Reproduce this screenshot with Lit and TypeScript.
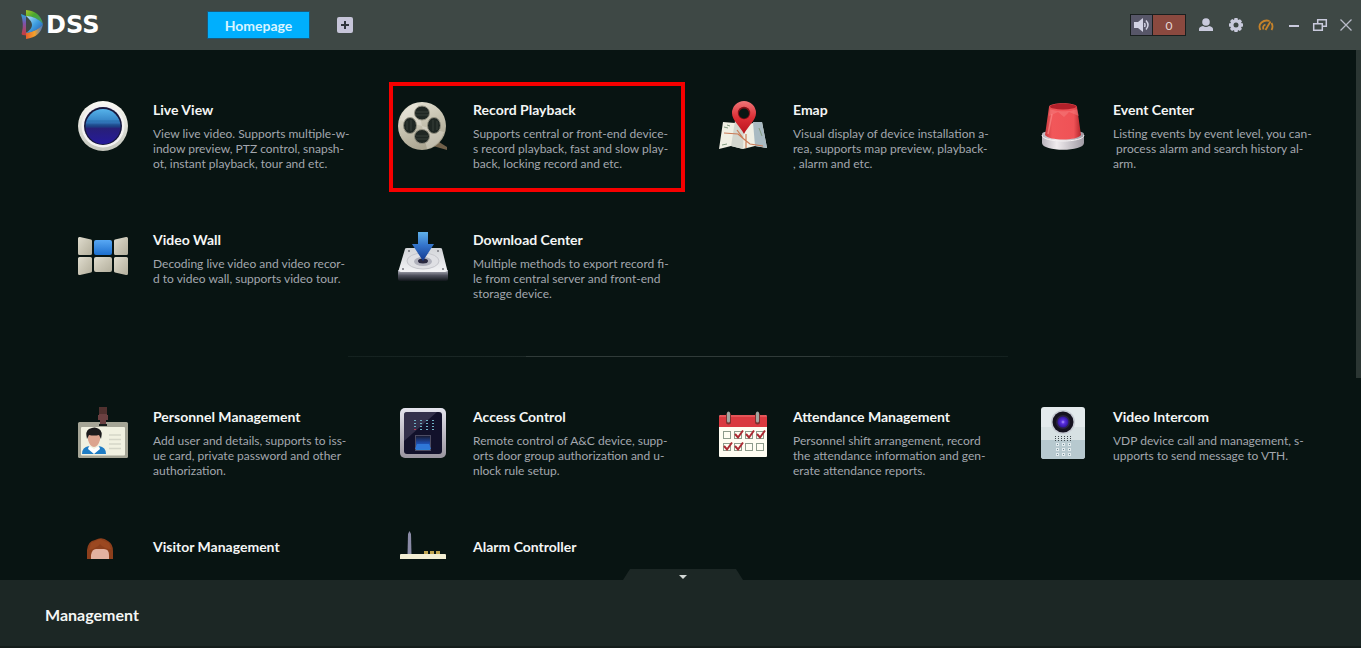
import { LitElement, html, svg, css, TemplateResult } from "lit";
import { customElement, property } from "lit/decorators.js";

interface Tile {
  icon: string;
  title: string;
  text: string;
  marked?: boolean;
}

const general: Tile[] = [
  { icon: "live", title: "Live View", text: "View live video. Supports multiple-w-\nindow preview, PTZ control, snapsh-\not, instant playback, tour and etc." },
  { icon: "reel", title: "Record Playback", text: "Supports central or front-end device-\ns record playback, fast and slow play-\nback, locking record and etc.", marked: true },
  { icon: "map", title: "Emap", text: "Visual display of device installation a-\nrea, supports map preview, playback-\n, alarm and etc." },
  { icon: "siren", title: "Event Center", text: "Listing events by event level, you can-\n process alarm and search history al-\narm." },
  { icon: "wall", title: "Video Wall", text: "Decoding live video and video recor-\nd to video wall, supports video tour." },
  { icon: "download", title: "Download Center", text: "Multiple methods to export record fi-\nle from central server and front-end\nstorage device." },
];

const extended: Tile[] = [
  { icon: "badge", title: "Personnel Management", text: "Add user and details, supports to iss-\nue card, private password and other\nauthorization." },
  { icon: "access", title: "Access Control", text: "Remote control of A&C device, supp-\norts door group authorization and u-\nnlock rule setup." },
  { icon: "calendar", title: "Attendance Management", text: "Personnel shift arrangement, record\nthe attendance information and gen-\nerate attendance reports." },
  { icon: "intercom", title: "Video Intercom", text: "VDP device call and management, s-\nupports to send message to VTH." },
  { icon: "visitor", title: "Visitor Management", text: "" },
  { icon: "alarm", title: "Alarm Controller", text: "" },
];

const dots = (xs: number[], ys: number[], w: number, h: number, fill: string) =>
  ys.map((y) => xs.map((x) => svg`<rect x=${x} y=${y} width=${w} height=${h} fill=${fill} />`));

const dayBox = (x: number, y: number, ticked: boolean) => svg`
  <rect x=${x + 0.5} y=${y + 0.5} width="7" height="7" fill="#fffdf2" stroke="#8d9b8b" />
  ${ticked ? svg`<path d=${`M${x + 1} ${y + 3}l3 3.5 5-7`} fill="none" stroke="#ab2a33" stroke-width="2" />` : ""}`;

const icons: Record<string, TemplateResult> = {
  live: svg`
    <defs>
      <linearGradient id="rim" x2="0" y2="1"><stop stop-color="#fbfaf4" /><stop offset="1" stop-color="#c3c5bc" /></linearGradient>
      <linearGradient id="lens" x2="0" y2="1">
        <stop stop-color="#56b3ea" /><stop offset=".35" stop-color="#3583c6" /><stop offset=".5" stop-color="#1d3f85" />
        <stop offset=".56" stop-color="#281f78" /><stop offset="1" stop-color="#251a9b" />
      </linearGradient>
    </defs>
    <circle cx="26" cy="26" r="25" fill="url(#rim)" />
    <circle cx="26" cy="26" r="21.5" fill="#f3f2f2" />
    <circle cx="26" cy="26" r="19" fill="#17173d" />
    <circle cx="26" cy="26.5" r="17.5" fill="url(#lens)" />
    <path d="M9 21h34M8.500 25h35" stroke="#123b70" stroke-width="1" opacity=".3" />`,
  reel: svg`
    <defs>
      <linearGradient id="tin" x2=".4" y2="1"><stop stop-color="#e9e7da" /><stop offset=".5" stop-color="#cbc7b5" /><stop offset="1" stop-color="#aaa591" /></linearGradient>
    </defs>
    <path d="M36 46l6-4 8 5v3z" fill="#71614a" />
    <circle cx="25" cy="26" r="24" fill="url(#tin)" />
    <path d="M3 20A24 24 0 0 1 20 3l5 23z M47 32A24 24 0 0 1 30 49l-5-23z" fill="#f1efe5" opacity=".35" />
    <g fill="#1f2723" stroke="#949283">
      <ellipse cx="25" cy="13" rx="7.500" ry="7" /><ellipse cx="25" cy="36.500" rx="7.500" ry="7" />
      <ellipse cx="13" cy="25.500" rx="6.500" ry="8" /><ellipse cx="37" cy="25.500" rx="6.500" ry="8" />
    </g>
    <path d="M19 12h12M19 15h12M19 36h12M19 39h12M10 21v9M14 20v11M36 20v11M40 21v9" stroke="#39413a" stroke-width="1" />`,
  map: svg`
    <defs>
      <linearGradient id="pin" x2="0" y2="1"><stop stop-color="#ef7577" /><stop offset=".5" stop-color="#dc2e35" /><stop offset="1" stop-color="#b9131c" /></linearGradient>
    </defs>
    <path d="M6 22l12 1 9 2 9-2 9-1 5 26-12-2-12 3-12-3-12 3z" fill="#f0efe4" />
    <path d="M18 21l9 4-1 24-12-3z" fill="#d3d6ce" />
    <path d="M36 22l9 0 5 26-12-2z" fill="#a9bac2" />
    <path d="M7 33l14 1 7 6 5 4 13 2M29 34v14M20 30l6 8" fill="none" stroke="#cb7b56" stroke-width="1.200" />
    <path d="M7 27l4 1M5 45l5-1M42 28l3 8M10 25l3 1" stroke="#819b80" />
    <path d="M27 34C23 26 15 20.500 15 13a12 12 0 0 1 24 0C39 20.500 31 26 27 34z" fill="url(#pin)" />
    <circle cx="27" cy="13" r="6.200" fill="#821017" /><circle cx="27" cy="13.500" r="5" fill="#081613" />`,
  siren: svg`
    <defs>
      <linearGradient id="dome" x2="1" y2="0"><stop stop-color="#c93a3e" /><stop offset=".2" stop-color="#f1575a" /><stop offset=".8" stop-color="#ef5256" /><stop offset="1" stop-color="#b3262c" /></linearGradient>
      <linearGradient id="foot" x2="1" y2="0"><stop stop-color="#b9b3bc" /><stop offset=".35" stop-color="#f0ebee" /><stop offset="1" stop-color="#a09ba4" /></linearGradient>
    </defs>
    <path d="M5 34c0-5 42-5 42 0v9c0 9-42 9-42 0z" fill="url(#foot)" />
    <path d="M5 35c0 8 42 8 42 0" fill="none" stroke="#f7f2f4" />
    <path d="M12 7c0-5 28-5 28 0l4 28c-4 6-32 6-36 0z" fill="url(#dome)" />
    <ellipse cx="26" cy="6.500" rx="13" ry="3" fill="#b3202a" />
    <path d="M12 16l9-4 6 5 5-5 10 4-2-7c-5 3-22 3-27 0z" fill="#f7898a" opacity=".4" />
    <path d="M15 14l-4 20" stroke="#ff9290" stroke-width="1.500" opacity=".6" />`,
  wall: svg`
    <defs>
      <linearGradient id="panel" x2="1" y2="1"><stop stop-color="#e0ddcf" /><stop offset=".5" stop-color="#c9c5b4" /><stop offset="1" stop-color="#b3af9d" /></linearGradient>
      <linearGradient id="screen" x2="0" y2="1"><stop stop-color="#58a8f4" /><stop offset="1" stop-color="#1d6fce" /></linearGradient>
    </defs>
    <g fill="url(#panel)">
      <path d="M1 8.500q0-2 2-1.500l11 2.500q1 .3 1 1.500v12.500q0 1.500-1.500 1.500h-11Q1 25 1 23.500z" />
      <path d="M51 8.500q0-2-2-1.500L38 9.500q-1 .3-1 1.500v12.500q0 1.500 1.500 1.500h11q1.500 0 1.500-1.500z" />
      <path d="M1 28.500Q1 27 2.500 27h11q1.500 0 1.500 1.500V41q0 1.200-1 1.500L3 45q-2 .5-2-1.500z" />
      <path d="M51 28.500q0-1.500-1.500-1.500h-11q-1.500 0-1.500 1.500V41q0 1.200 1 1.500L49 45q2 .5 2-1.500z" />
      <rect x="17" y="27" width="18" height="15" rx="2" />
    </g>
    <rect x="17" y="10" width="18" height="15" rx="2" fill="url(#screen)" />`,
  download: svg`
    <defs>
      <linearGradient id="disk" x2="0" y2="1"><stop stop-color="#d3d5d9" /><stop offset="1" stop-color="#f2f3f5" /></linearGradient>
      <linearGradient id="shade" x2="0" y2="1"><stop stop-color="#b6b8c2" /><stop offset=".5" stop-color="#4e505c" /><stop offset="1" stop-color="#10161a" /></linearGradient>
      <linearGradient id="arrow" x2="0" y2="1"><stop stop-color="#5fb0e8" /><stop offset=".45" stop-color="#3475cc" /><stop offset="1" stop-color="#12378e" /></linearGradient>
    </defs>
    <path d="M1 40h50v9q0 2-2 2H3q-2 0-2-2z" fill="url(#shade)" />
    <path d="M10 18h33q2 0 2 1l5 20q1 3-2 3H4q-3 0-2-3l6-20q0-1 2-1z" fill="url(#disk)" />
    <ellipse cx="26" cy="31" rx="16" ry="8" fill="#dfe0e4" stroke="#c5c6cc" />
    <ellipse cx="26" cy="31.500" rx="9" ry="4.500" fill="#b0b1bc" /><ellipse cx="26" cy="31" rx="5" ry="2.500" fill="#29283f" />
    <g fill="#74767d"><circle cx="12" cy="21" r="1" /><circle cx="41" cy="21" r="1" /><circle cx="6" cy="39" r="1" /><circle cx="46" cy="39" r="1" /></g>
    <path d="M21 2h10v12h6L26 31 15 14h6z" fill="url(#arrow)" />`,
  badge: svg`
    <rect x="1" y="15" width="50" height="36" rx="1.500" fill="#a5a596" />
    <rect x="4" y="20" width="44" height="28.500" rx="1" fill="#f1f1e1" />
    <path d="M22 0h8v8h1v5h-2v5h-6v-5h-2V8h1z" fill="#6b4041" /><path d="M22 0h8v7h-8z" fill="#51312f" /><path d="M22 17h8v2h-8z" fill="#171c1b" />
    <path d="M5 47q0-7 7-8l5 5 5-5q7 1 7 8z" fill="#1f7dc5" />
    <path d="M12 39l5 3 5-3 1 3-6 5-6-5z" fill="#fff" />
    <path d="M11 27h12v6q-2 7-6 7t-6-7z" fill="#dca48f" />
    <path d="M10 32q-2-8 2-10 6-3 10 0 4 2 2 10l-2-4q-5 1-10 0z" fill="#1b1b1c" />
    <path d="M32 28h12M32 32.500h12M32 37h12M32 41.500h12" stroke="#d5d6c8" stroke-width="1.500" />`,
  access: svg`
    <defs>
      <linearGradient id="frame" x2="0" y2="1"><stop stop-color="#e4e4ed" /><stop offset="1" stop-color="#99949f" /></linearGradient>
      <linearGradient id="finger" x2="0" y2="1"><stop stop-color="#17172a" /><stop offset=".5" stop-color="#1e4ba9" /><stop offset="1" stop-color="#2f86dd" /></linearGradient>
    </defs>
    <rect x="3" y="1" width="46" height="50" rx="5" fill="url(#frame)" />
    <rect x="7" y="5" width="38" height="42" rx="3" fill="#12112b" />
    <path d="M7 34V8q0-3 3-3h30z" fill="#4a4660" opacity=".6" />
    ${dots([17, 23, 29, 35], [13, 16, 19], 2, 1, "#6fb0c4")}
    ${dots([17], [22], 2, 1, "#b33a56")}${dots([23, 29, 35], [22], 2, 1, "#6fb0c4")}
    <rect x="18.500" y="28.500" width="15" height="15" fill="url(#finger)" stroke="#4c4b62" />
    <path d="M20 37h12l2 5H18z" fill="#2f77d8" />`,
  calendar: svg`
    <path d="M2 10q0-2 2-2h44q2 0 2 2v39q0 1-1 1H3q-1 0-1-1z" fill="#fffdf2" />
    <path d="M2 20V10q0-2 2-2h44q2 0 2 2v10z" fill="#d9393f" /><path d="M3 9h46" stroke="#ef7373" />
    <path d="M11.500 8v7M40.500 8v7" stroke="#7c302f" stroke-width="5" stroke-linecap="round" />
    <path d="M11.500 6v8M40.500 6v8" stroke="#a3a7a1" stroke-width="3" stroke-linecap="round" />
    ${dayBox(6, 24, false)}${dayBox(17, 24, true)}${dayBox(28, 24, true)}${dayBox(39, 24, true)}
    ${dayBox(6, 36, true)}${dayBox(17, 36, true)}${dayBox(28, 36, false)}${dayBox(39, 36, false)}`,
  intercom: svg`
    <defs><radialGradient id="eye"><stop stop-color="#b49bff" /><stop offset=".35" stop-color="#5b2fe0" /><stop offset="1" stop-color="#2f149c" /></radialGradient></defs>
    <rect x="4" y="0" width="44" height="52" rx="3" fill="#e3eaec" />
    <path d="M4 33h44v16q0 3-3 3H7q-3 0-3-3z" fill="#b7c9cf" />
    <path d="M4 20h44v13H4z" fill="#cfdadd" opacity=".6" />
    <circle cx="26" cy="15" r="12" fill="#c7ccd4" /><circle cx="26" cy="15" r="10.500" fill="#15121f" />
    <circle cx="26" cy="15" r="7" fill="#2b2440" /><circle cx="26" cy="15" r="5.500" fill="url(#eye)" />
    ${dots([18, 21, 24, 27, 30, 33], [29, 31, 33], 1, 1, "#424b50")}
    ${dots([19, 25, 31], [36, 41, 46], 3, 3, "#e2ebee")}${dots([20, 26, 32], [37, 42, 47], 1, 1, "#6d8894")}`,
  visitor: svg`
    <path d="M10 24V13Q11 4 18 3q7-4 13 1 5 3 5 10v10z" fill="#8d3f1c" />
    <path d="M14 24v-6q1-6 5-6h8q5 0 5 6v6z" fill="#e3b1a0" />
    <path d="M12 13Q20 11 23 7q4 5 11 5l-2-6-9-4-9 4z" fill="#9b4821" />`,
  alarm: svg`
    <path d="M10.500 18l.5-21 1.500-3 1.500 3 .5 21z" fill="#8a8ba6" />
    ${dots([27, 33, 39], [14], 4, 4, "#c2a650")}
    <rect x="3" y="17" width="46" height="14" rx="1" fill="#f3eed3" />`,
};

@customElement("app-tile")
class AppTile extends LitElement {
  @property({ attribute: false }) tile!: Tile;

  static styles = css`
    :host { display: block; }
    .tile { display: flex; gap: 24px; height: 110px; padding-left: 1px; position: relative; color: inherit; text-decoration: none; }
    .icon { flex: none; width: 52px; height: 56px; overflow: visible; }
    .title { margin: 0 0 6px; font-size: 14px; line-height: 20px; font-weight: 700; color: #f4f6f5; white-space: nowrap; }
    .text { margin: 0; font-size: 12px; line-height: 15px; color: #a3a7ae; white-space: pre; }
    .marked::after { content: ""; position: absolute; inset: -18px 31px 18px -7px; border: 4px solid #f60000; }
  `;

  render() {
    const t = this.tile;
    return html`<a class="tile ${t.marked ? "marked" : ""}" href="#${t.icon}">
      <svg class="icon" viewBox="0 0 52 56" aria-hidden="true">${icons[t.icon]}</svg>
      <div>
        <h2 class="title">${t.title}</h2>
        <p class="text">${t.text}</p>
      </div>
    </a>`;
  }
}

@customElement("app-root")
class AppRoot extends LitElement {
  static styles = css`
    :host { display: flex; flex-direction: column; height: 100vh; overflow: hidden; background: #081412; color: #f4f6f5; font-family: Lato, "Liberation Sans", sans-serif; }
    button { border: 0; padding: 0; margin: 0; background: none; font: inherit; color: inherit; display: flex; align-items: center; justify-content: center; }
    svg { display: block; }
    .top { flex: none; display: flex; align-items: center; height: 50px; padding: 0 2px 0 20px; background: #3e4845; }
    .brand { display: flex; align-items: center; gap: 2px; width: 187px; font: 700 24px/28px "DejaVu Sans", sans-serif; color: #fff; }
    .tab { width: 103px; height: 28px; border: 1px solid #1d5a79; background: #00affd; font-size: 14px; font-weight: 700; color: #d8f4ff; }
    .add { width: 16px; height: 16px; margin-left: 27px; border-radius: 2px; background: #c6c5d9; }
    .tools { display: flex; align-items: center; margin-left: auto; }
    .sound { display: flex; height: 20px; margin-right: 5px; border: 1px solid #191f1f; background: #575668; }
    .mute { width: 21px; }
    .count { width: 32px; border-left: 1px solid #191f1f; background: #8a493f; color: #e6dad9; font-size: 12px; line-height: 22px; text-align: center; }
    .tool { width: 30px; height: 24px; }
    .narrow { width: 26px; }
    .body { flex: 1; min-height: 0; display: flex; padding-bottom: 21px; position: relative; }
    .list { flex: 1; min-width: 0; overflow: hidden; padding: 50px 0 0 76px; }
    .grid { display: grid; grid-template-columns: repeat(4, minmax(0, 1fr)); row-gap: 20px; }
    .rule { height: 1px; width: 660px; margin: 16px auto 50px 272px; border: 0; background: linear-gradient(90deg, #14211f, #1e2a28 27%, #303b39 27%, #303b39 73%, #1e2a28 73%, #14211f); }
    .rail { flex: none; width: 5px; }
    .thumb { height: 328px; background: #2b3633; }
    .fold { position: absolute; bottom: 0; left: 0; right: 0; display: flex; justify-content: center; padding-left: 5px; }
    .handle { width: 120px; height: 11px; padding-top: 4px; background: #1c2725; clip-path: polygon(7px 0, 113px 0, 120px 100%, 0 100%); }
    .foot { flex: none; height: 68px; box-sizing: border-box; padding: 23px 45px; background: #1c2725; border-bottom: 2px solid #141d1b; }
    .heading { margin: 0; font-size: 16px; line-height: 24px; font-weight: 700; }
  `;

  render() {
    return html`
      <header class="top">
        <div class="brand">
          <svg width="24" height="30" viewBox="0 0 24 30" aria-hidden="true">
            <defs>
              <linearGradient id="a" x2="1" y2="1"><stop stop-color="#a9c927" /><stop offset=".4" stop-color="#4ba82f" /><stop offset="1" stop-color="#3c9a77" /></linearGradient>
              <linearGradient id="b" x2="0" y2="1"><stop stop-color="#25a7d9" /><stop offset=".4" stop-color="#7a55b0" /><stop offset="1" stop-color="#cf3a32" /></linearGradient>
              <linearGradient id="c" x2="1" y2="0"><stop stop-color="#e8612c" /><stop offset=".5" stop-color="#f3a22b" /><stop offset="1" stop-color="#3d78cf" /></linearGradient>
              <linearGradient id="d" x2="1" y2="1"><stop stop-color="#b9e6f7" /><stop offset=".5" stop-color="#3f9fe0" /><stop offset="1" stop-color="#2455ad" /></linearGradient>
            </defs>
            <path d="M6 0q14 1 17 14Q15 6 6 6z" fill="url(#a)" />
            <path d="M1 4l5 2v16l4 4-7-1q-2 0-1-3 2-8-1-18z" fill="url(#b)" />
            <path d="M6 23q9-1 17-9-2 13-17 15z" fill="url(#c)" />
            <path d="M6 6q10 0 17 8-6 8-17 9 6-4 6-8T6 6z" fill="url(#d)" />
          </svg>
          <span>DSS</span>
        </div>
        <button class="tab">Homepage</button>
        <button class="add" aria-label="Add tab">
          <svg width="10" height="10" viewBox="0 0 10 10"><path d="M5 1v8M1 5h8" stroke="#30363c" stroke-width="2" /></svg>
        </button>
        <div class="tools">
          <div class="sound">
            <button class="mute" aria-label="Alarm sound">
              <svg width="17" height="16" viewBox="0 0 17 16"><path d="M1 5h4l5-4v14l-5-4H1z" fill="#d3d3e4" /><path d="M11.500 6q1 2 0 4M13 3.500q4 4.500 0 9" fill="none" stroke="#d3d3e4" stroke-width="1.500" /></svg>
            </button>
            <span class="count">0</span>
          </div>
          <button class="tool" aria-label="User">
            <svg width="16" height="16" viewBox="0 0 16 16" fill="#c9cadd"><circle cx="8" cy="5" r="3.800" /><path d="M1 14v-2q0-2 4-3 3 2 6 0 4 1 4 3v2z" /></svg>
          </button>
          <button class="tool" aria-label="Settings">
            <svg width="16" height="16" viewBox="0 0 16 16"><path d="M6.500 1h3l.5 2 2-.8 2 2L13 6l2 .5v3l-2 .5.9 2-2 2-1.900-1-.5 2h-3L6 13l-2 .9-2-2L3 10l-2-.5v-3L3 6l-.9-1.900 2-2L6 3z" fill="#c9cadd" /><circle cx="8" cy="8" r="2.500" fill="#3e4845" /></svg>
          </button>
          <button class="tool" aria-label="Performance">
            <svg width="16" height="16" viewBox="0 0 16 16" fill="none" stroke="#c7832a" stroke-width="1.800"><path d="M2.500 13Q0 8.500 3.500 5.500 7 2.500 11.500 4M13.500 6q2 3.500 0 7" /><path d="M5.500 12.500Q4 9 7.500 7.500M7.500 13L12.500 4.500" /></svg>
          </button>
          <button class="tool narrow" aria-label="Minimize">
            <svg width="16" height="16" viewBox="0 0 16 16"><path d="M3 9h10" stroke="#c9cadd" stroke-width="2" /></svg>
          </button>
          <button class="tool narrow" aria-label="Restore">
            <svg width="16" height="16" viewBox="0 0 16 16" fill="none" stroke="#c9cadd" stroke-width="1.500"><path d="M1.700 6.700h8.600v6.600H1.700zM5.700 6V2.700h8.600v6.600H11" /></svg>
          </button>
          <button class="tool narrow" aria-label="Close">
            <svg width="16" height="16" viewBox="0 0 16 16"><path d="M2.500 2.500l11 11M13.500 2.500l-11 11" stroke="#b9bbc9" stroke-width="1.300" /></svg>
          </button>
        </div>
      </header>
      <main class="body">
        <div class="list">
          <section class="grid">${general.map((t) => html`<app-tile .tile=${t}></app-tile>`)}</section>
          <hr class="rule" />
          <section class="grid">${extended.map((t) => html`<app-tile .tile=${t}></app-tile>`)}</section>
        </div>
        <div class="rail"><div class="thumb"></div></div>
        <div class="fold">
          <button class="handle" aria-label="Collapse management">
            <svg width="8" height="4" viewBox="0 0 8 4"><path d="M0 0h8L4 4z" fill="#d3d8d6" /></svg>
          </button>
        </div>
      </main>
      <footer class="foot"><h2 class="heading">Management</h2></footer>
    `;
  }
}
